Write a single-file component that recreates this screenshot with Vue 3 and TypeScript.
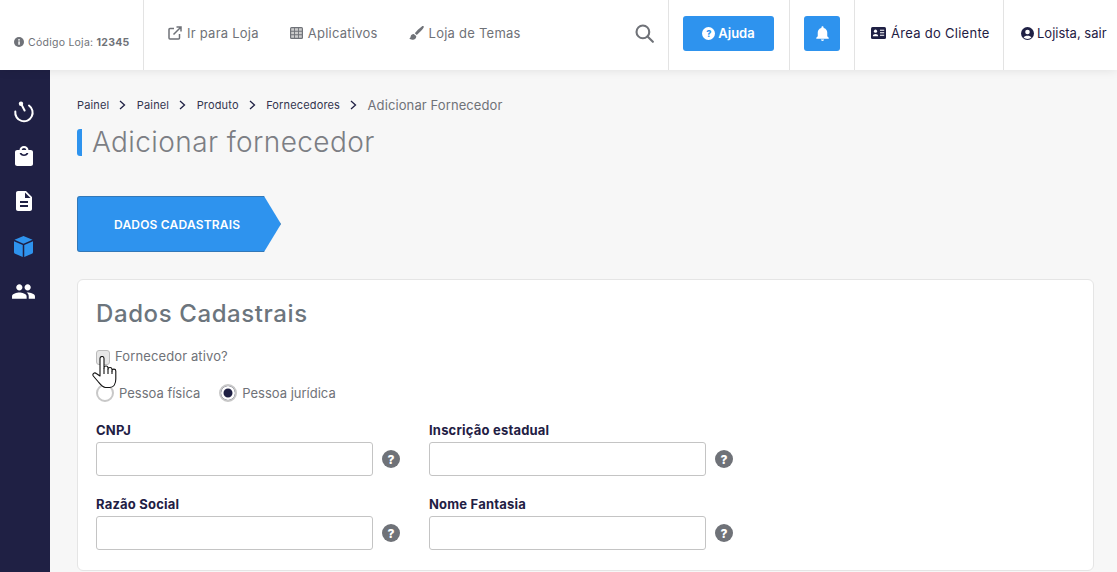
<script setup lang="ts">
const crumbs = ['Painel', 'Painel', 'Produto', 'Fornecedores']
const rows = [
	['CNPJ', 'Inscrição estadual'],
	['Razão Social', 'Nome Fantasia'],
]
</script>

<template>
	<div class="page">
		<header class="topbar">
			<div class="code">
				<svg class="info" viewBox="0 0 16 16"><circle cx="8" cy="8" r="8" fill="#6f7278" /><rect x="6.9" y="7" width="2.4" height="5.4" fill="#fff" /><circle cx="8" cy="4.5" r="1.4" fill="#fff" /></svg>
				<span>Código Loja: <b>12345</b></span>
			</div>
			<nav class="links">
				<a class="link">
					<svg width="14" height="14" viewBox="0 0 14 14" fill="none" stroke="#6f7278" stroke-width="1.5"><path d="M11.5 8v4a1 1 0 0 1-1 1H2a1 1 0 0 1-1-1V3.5a1 1 0 0 1 1-1h4" /><path d="M5.5 8.5 12.5 1.5M8.5 1h4.5v4.5" /></svg>
					Ir para Loja
				</a>
				<a class="link">
					<svg width="13" height="12" viewBox="0 0 13 12"><rect width="13" height="12" rx="1.5" fill="#6f7278" /><path d="M1.200 1.300h2.900v2.400H1.200zM5 1.300h3v2.400H5zM8.900 1.300h2.900v2.400H8.900zM1.200 4.800h2.900v2.400H1.200zM5 4.800h3v2.400H5zM8.900 4.800h2.900v2.400H8.900zM1.200 8.300h2.900v2.400H1.200zM5 8.300h3v2.400H5zM8.900 8.300h2.900v2.400H8.900z" fill="#ccc" /></svg>
					Aplicativos
				</a>
				<a class="link">
					<svg width="15" height="14" viewBox="0 0 15 14" fill="#6f7278"><path d="M14.600.3c-.5-.5-1.200-.3-1.800.1C10.600 2 7.600 4.800 5.800 7.200l2 1.700c2.300-2 5.200-4.800 6.600-7 .4-.6.6-1.200.2-1.600z" /><path d="M4.800 8c-1.800 0-2.900 1.100-3.200 2.700C1.400 11.800.8 12.300 0 12.600c1.300 1 3.400 1.400 5 .8 1.700-.6 2.500-2 2.200-3.500z" /></svg>
					Loja de Temas
				</a>
			</nav>
			<div class="search">
				<svg width="19" height="19" viewBox="0 0 20 20" fill="none" stroke="#6f7278" stroke-width="2.2"><circle cx="8.300" cy="8.300" r="6.700" /><path d="m13.200 13.200 5.600 5.600" stroke-linecap="round" /></svg>
			</div>
			<div class="cell cell-help">
				<button class="btn btn-help"><span class="qmark">?</span>Ajuda</button>
			</div>
			<div class="cell cell-bell">
				<button class="btn btn-bell">
					<svg width="13" height="15" viewBox="3.500 2 17 20.500" fill="#fff"><path d="M12 22.500c1.200 0 2.200-.9 2.200-2h-4.400c0 1.100 1 2 2.200 2zm6.500-6.500v-5c0-3.100-1.800-5.600-5-6.300V4c0-.8-.7-1.500-1.500-1.500s-1.500.7-1.500 1.500v.7c-3.200.7-5 3.200-5 6.300v5l-2 2v1.500h17V18z" /></svg>
				</button>
			</div>
			<a class="cell cell-client">
				<svg width="15" height="12" viewBox="0 0 15 12"><rect width="15" height="12" rx="1.500" fill="#1f2044" /><circle cx="4.500" cy="4.200" r="1.600" fill="#fff" /><path d="M1.800 9.300c0-3.200 5.400-3.200 5.400 0z" fill="#fff" /><path d="M9 3.300h4.200M9 5.800h4.200M9 8.300h4.200" stroke="#fff" stroke-width="1.100" /></svg>
				Área do Cliente
			</a>
			<a class="cell cell-user">
				<svg width="13" height="13" viewBox="0 0 13 13"><circle cx="6.500" cy="6.500" r="6.500" fill="#1f2044" /><circle cx="6.500" cy="5" r="2.300" fill="#fff" /><path d="M2.600 10.600c1-2.500 6.800-2.500 7.800 0-1.800 1.700-6 1.700-7.800 0z" fill="#fff" /></svg>
				Lojista, sair
			</a>
		</header>

		<div class="body">
			<aside class="sidebar">
				<div class="side-item">
					<svg width="24" height="24" viewBox="0 0 24 24" fill="none" stroke="#fff" stroke-width="2" stroke-linecap="round"><path d="M17 6.500A8.700 8.700 0 1 1 3.300 12.500" /><path d="M9.200 5 12.600 11.500" stroke-width="2" /><circle cx="9" cy="4.800" r="2.200" fill="#fff" stroke="none" /></svg>
				</div>
				<div class="side-item">
					<svg width="18" height="20" viewBox="4 2 16 20" fill="#fff" preserveAspectRatio="none"><path d="M18 6h-2c0-2.210-1.790-4-4-4S8 3.790 8 6H6c-1.100 0-2 .9-2 2v12c0 1.100.9 2 2 2h12c1.100 0 2-.9 2-2V8c0-1.100-.9-2-2-2zm-6-2c1.100 0 2 .9 2 2h-4c0-1.100.9-2 2-2zm0 8c-1.900 0-3.500-1.300-3.900-3h1.700c.3.800 1.200 1.400 2.200 1.400s1.900-.6 2.200-1.400h1.700c-.4 1.700-2 3-3.900 3z" /></svg>
				</div>
				<div class="side-item">
					<svg width="16" height="20" viewBox="4 2 16 20" fill="#fff"><path d="M14 2H6c-1.100 0-1.990.9-1.990 2L4 20c0 1.100.89 2 1.990 2H18c1.100 0 2-.9 2-2V8l-6-6zm2 16H8v-2h8v2zm0-4H8v-2h8v2zm-3-5V3.500L18.500 9H13z" /></svg>
				</div>
				<div class="side-item">
					<svg width="19" height="21" viewBox="0 0 20 22" fill="#2e93ee"><path d="M10 0 19.500 4 10 8 .5 4z" /><path d="M0 5.500 9.200 9.500V22L1.200 18.600C.4 18.300 0 17.700 0 17z" /><path d="M20 5.500 10.800 9.500V22l8-3.400c.8-.3 1.200-.9 1.200-1.600z" /></svg>
				</div>
				<div class="side-item">
					<svg width="25" height="25" viewBox="0 0 24 24" fill="#fff"><path d="M16 11c1.660 0 2.990-1.340 2.990-3S17.660 5 16 5c-1.660 0-3 1.340-3 3s1.340 3 3 3zm-8 0c1.660 0 2.990-1.340 2.990-3S9.660 5 8 5C6.340 5 5 6.340 5 8s1.340 3 3 3zm0 2c-2.330 0-7 1.170-7 3.500V19h14v-2.500c0-2.330-4.670-3.500-7-3.500zm8 0c-.29 0-.62.02-.97.05 1.160.84 1.970 1.970 1.970 3.450V19h6v-2.500c0-2.330-4.670-3.500-7-3.500z" /></svg>
				</div>
			</aside>

			<main class="content">
				<ol class="crumbs">
					<li v-for="(crumb, i) in crumbs" :key="i">
						{{ crumb }}
						<svg width="7" height="10" viewBox="0 0 7 10" fill="none" stroke="#1f2044" stroke-width="1.300"><path d="m1 1 4.500 4L1 9" /></svg>
					</li>
					<li class="current">Adicionar Fornecedor</li>
				</ol>
				<h1 class="title">Adicionar fornecedor</h1>
				<div class="tab">DADOS CADASTRAIS</div>

				<section class="card">
					<h2>Dados Cadastrais</h2>
					<label class="check">
						<span class="box"></span>
						<span class="check-text">Fornecedor ativo?</span>
					</label>
					<div class="radios">
						<label class="radio"><span class="dot"></span>Pessoa física</label>
						<label class="radio"><span class="dot on"></span>Pessoa jurídica</label>
					</div>
					<div v-for="(row, r) in rows" :key="r" class="fields">
						<div v-for="name in row" :key="name" class="field">
							<label>{{ name }}</label>
							<div class="control">
								<input type="text" />
								<span class="hint">?</span>
							</div>
						</div>
					</div>
				</section>
			</main>
		</div>

		<svg class="hand" width="26" height="33" viewBox="0 0 26 33" fill="#fff" stroke="#111" stroke-width="1.100" stroke-linejoin="round"><path d="M8 20V2.500a2 2 0 0 1 4 0V12a2 2 0 0 1 4 0v1.500a2 2 0 0 1 4 0V15a1.900 1.900 0 0 1 3.800 0v8c0 4.500-2 8.500-6 8.500H13.500c-3 0-5-3-7.500-6L1.300 20C0 18 2.500 16 4.300 17.500z" /><path d="M12 12v6M16 13.500V18M20 15v3" fill="none" /></svg>
	</div>
</template>

<style scoped>
.page {
	position: relative;
	height: 572px;
	overflow: hidden;
	background: #f7f7f7;
	font-family: Inter, 'Noto Sans', sans-serif;
	color: #1f2044;
}

.topbar {
	position: relative;
	z-index: 1;
	display: flex;
	height: 70px;
	background: #fff;
	box-shadow: 0 0 10px rgba(0, 0, 0, 0.1);
	font-size: 13px;
}

.code {
	display: flex;
	align-items: center;
	gap: 4px;
	width: 129px;
	padding: 14px 0 0 14px;
	border-right: 1px solid #e3e3e3;
	font-size: 10.500px;
	letter-spacing: 0.25px;
	color: #6f7278;
	white-space: nowrap;
}

.info {
	width: 10px;
	height: 10px;
}

.links {
	display: flex;
	align-items: center;
	gap: 31px;
	flex: 1;
	padding-left: 24px;
	margin-top: -4px;
	letter-spacing: 0.24px;
	color: #6f7278;
}

.link {
	display: flex;
	align-items: center;
	gap: 5px;
	white-space: nowrap;
}

.search {
	display: flex;
	align-items: center;
	width: 33px;
	margin-top: -4px;
}

.cell {
	display: flex;
	align-items: center;
	border-left: 1px solid #e3e3e3;
	white-space: nowrap;
}

.btn {
	display: flex;
	align-items: center;
	justify-content: center;
	height: 35px;
	margin-top: -4px;
	border: none;
	border-radius: 3px;
	background: #2e93ee;
	color: #fff;
	font: 600 13px Inter, sans-serif;
}

.cell-help {
	width: 121px;
	padding-left: 14px;
	box-sizing: border-box;
}

.btn-help {
	width: 91px;
	gap: 3px;
}

.qmark {
	display: flex;
	align-items: center;
	justify-content: center;
	width: 13px;
	height: 13px;
	border-radius: 50%;
	background: #fff;
	color: #2e93ee;
	font-size: 9px;
	font-weight: 800;
}

.cell-bell {
	width: 65px;
	padding-left: 14px;
	box-sizing: border-box;
}

.btn-bell {
	width: 36px;
}

.cell-client {
	gap: 5px;
	width: 149px;
	padding: 0 0 4px 16px;
	box-sizing: border-box;
	letter-spacing: 0.28px;
}

.cell-user {
	gap: 3px;
	width: 114px;
	padding: 0 0 4px 17px;
	box-sizing: border-box;
}

.body {
	display: flex;
	height: 502px;
}

.sidebar {
	width: 50px;
	padding: 18.500px 3px 0 0;
	box-sizing: border-box;
	background: #1f2044;
}

.side-item {
	display: flex;
	align-items: center;
	justify-content: center;
	height: 45px;
}

.content {
	flex: 1;
	padding: 27px 23px 0 27px;
}

.crumbs {
	display: flex;
	align-items: center;
	height: 16px;
	margin: 0;
	padding: 0;
	list-style: none;
	font-size: 11px;
	letter-spacing: 0.15px;
	color: #33354f;
}

.crumbs li {
	display: flex;
	align-items: center;
	gap: 10px;
	margin-right: 10.500px;
}

.crumbs .current {
	font-size: 13px;
	letter-spacing: 0.1px;
	color: #6f7278;
}

.title {
	margin: 16px 0 0;
	height: 27px;
	padding-left: 10px;
	border-left: 5px solid #2e93ee;
	border-radius: 3px;
	font-size: 28px;
	font-weight: 300;
	line-height: 27px;
	letter-spacing: 0.4px;
	color: #7c7e84;
}

.tab {
	display: flex;
	align-items: center;
	width: 204px;
	height: 56px;
	margin-top: 40px;
	padding-left: 37px;
	box-sizing: border-box;
	background: #2e93ee;
	box-shadow: inset 0 0 0 1px rgba(60, 60, 60, 0.3);
	clip-path: polygon(0 0, 187px 0, 100% 50%, 187px 100%, 0 100%);
	border-radius: 3px 0 0 3px;
	font-size: 12px;
	font-weight: 600;
	letter-spacing: 0.2px;
	color: #fff;
}

.card {
	height: 292px;
	margin-top: 27px;
	padding: 20px 18px 0;
	box-sizing: border-box;
	border: 1px solid #e5e5e5;
	border-radius: 6px;
	background: #fff;
}

.card h2 {
	margin: 0;
	font-size: 24px;
	font-weight: 500;
	line-height: 28px;
	letter-spacing: 0.6px;
	color: #6c757d;
}

.check {
	display: flex;
	align-items: center;
	gap: 5px;
	margin-top: 22px;
	height: 15px;
	font-size: 13px;
	letter-spacing: 0.12px;
	color: #6f7278;
}

.check-text {
	margin-top: -3px;
}

.box {
	width: 14px;
	height: 15px;
	box-sizing: border-box;
	border: 1px solid #bbb;
	border-radius: 3px;
	background: #e6e6e6;
}

.radios {
	display: flex;
	gap: 19px;
	margin-top: 19px;
}

.radio {
	display: flex;
	align-items: center;
	gap: 5px;
	font-size: 13px;
	color: #6f7278;
}

.dot {
	width: 18px;
	height: 18px;
	box-sizing: border-box;
	border: 2px solid #c8c8c8;
	border-radius: 50%;
	background: #fff;
}

.dot.on {
	background: #1f2044;
	box-shadow: inset 0 0 0 2.500px #fff;
}

.fields {
	display: flex;
	gap: 28px;
	margin-top: 21px;
}

.field label {
	display: block;
	height: 15px;
	margin-bottom: 4px;
	font-size: 13px;
	font-weight: 700;
	line-height: 15px;
	letter-spacing: 0.2px;
}

.control {
	display: flex;
	align-items: center;
	gap: 9px;
	margin-right: 1px;
}

.control input {
	width: 277px;
	height: 34px;
	box-sizing: border-box;
	border: 1px solid #c4c4c4;
	border-radius: 3px;
	background: #fff;
}

.hint {
	display: flex;
	align-items: center;
	justify-content: center;
	width: 18px;
	height: 18px;
	border-radius: 50%;
	background: #6f7278;
	color: #fff;
	font-size: 12px;
	font-weight: 800;
}

.hand {
	position: absolute;
	left: 92px;
	top: 356px;
	z-index: 2;
}
</style>

<style>
body {
	margin: 0;
}
</style>
